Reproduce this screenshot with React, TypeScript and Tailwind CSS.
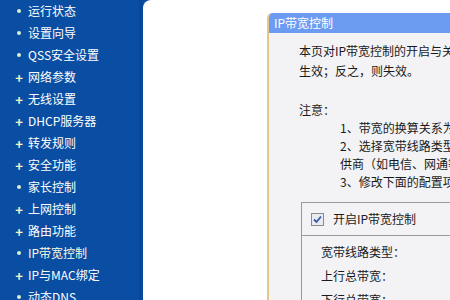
const menu: { label: string; plus: boolean; active?: boolean }[] = [
  { label: '运行状态', plus: false },
  { label: '设置向导', plus: false },
  { label: 'QSS安全设置', plus: false },
  { label: '网络参数', plus: true },
  { label: '无线设置', plus: true },
  { label: 'DHCP服务器', plus: true },
  { label: '转发规则', plus: true },
  { label: '安全功能', plus: true },
  { label: '家长控制', plus: false },
  { label: '上网控制', plus: true },
  { label: '路由功能', plus: true },
  { label: 'IP带宽控制', plus: false, active: true },
  { label: 'IP与MAC绑定', plus: true },
  { label: '动态DNS', plus: false },
];

export default function App() {
  return (
    <div
      className="w-[450px] h-[300px] flex overflow-hidden bg-[#0a4ea3] text-[12px]"
      style={{ fontFamily: '"Noto Sans CJK SC", "Liberation Sans", sans-serif' }}
    >
      {/* sidebar */}
      <div className="w-[143px] shrink-0 border-r-[4px] border-[#08469a] flex flex-col">
        {menu.map((m) => (
          <div key={m.label} className="h-[22px] flex items-center shrink-0">
            <span className="w-[28px] flex justify-center pl-[13px] pr-[3px]">
              {m.plus ? (
                <span className="text-[#f4f6c8] font-bold text-[13px] leading-none">+</span>
              ) : (
                <span className="w-[4px] h-[4px] rounded-full bg-[#d8f0d0]" />
              )}
            </span>
            <span className={m.active ? 'text-[#fbfbe0]' : 'text-white'}>{m.label}</span>
          </div>
        ))}
      </div>

      {/* main */}
      <div className="flex-1 bg-white rounded-tl-[8px] pl-[124px] pt-[13px] min-w-0">
        <div className="h-full border-l-2 border-[#e6c68a] bg-[#f3f3f5] rounded-tl-[5px] min-w-0 overflow-hidden">
          <div className="h-[20px] bg-[#6b9cf2] rounded-tl-[4px] flex items-center pl-[5px] text-white whitespace-nowrap">
            IP带宽控制
          </div>
          <div className="pl-[30px] pt-[8px] text-[#1a1a1a] whitespace-nowrap">
            <div className="leading-[20px]">
              <p>本页对IP带宽控制的开启与关闭进行设置，开启后</p>
              <p>生效；反之，则失效。</p>
            </div>
            <p className="mt-[20px] leading-[18px]">注意：</p>
            <div className="pl-[41px] leading-[18px]">
              <p>1、带宽的换算关系为：1Mbps = 1000Kbps；</p>
              <p>2、选择宽带线路类型及填写带宽大小时，请根据实际情况</p>
              <p>供商（如电信、网通等）咨询；</p>
              <p>3、修改下面的配置项后，请点击“保存”按钮，使配置生效。</p>
            </div>
            <div className="mt-[11px] ml-[2px] border border-[#9a9a9a] border-r-0">
              <div className="h-[33px] flex items-center pl-[9px] gap-[9px] border-b border-[#9a9a9a]">
                <span className="w-[13px] h-[13px] border border-[#8a8a8a] bg-[#e8ecf2] flex items-center justify-center">
                  <svg width="9" height="9" viewBox="0 0 9 9">
                    <path d="M1 4.5 L3.5 7 L8 1.5" fill="none" stroke="#3b58a8" strokeWidth="1.8" />
                  </svg>
                </span>
                <span>开启IP带宽控制</span>
              </div>
              <div className="pl-[19px] pt-[4px] leading-[24px]">
                <p>宽带线路类型：</p>
                <p>上行总带宽：</p>
                <p>下行总带宽：</p>
              </div>
            </div>
          </div>
        </div>
      </div>
    </div>
  );
}
